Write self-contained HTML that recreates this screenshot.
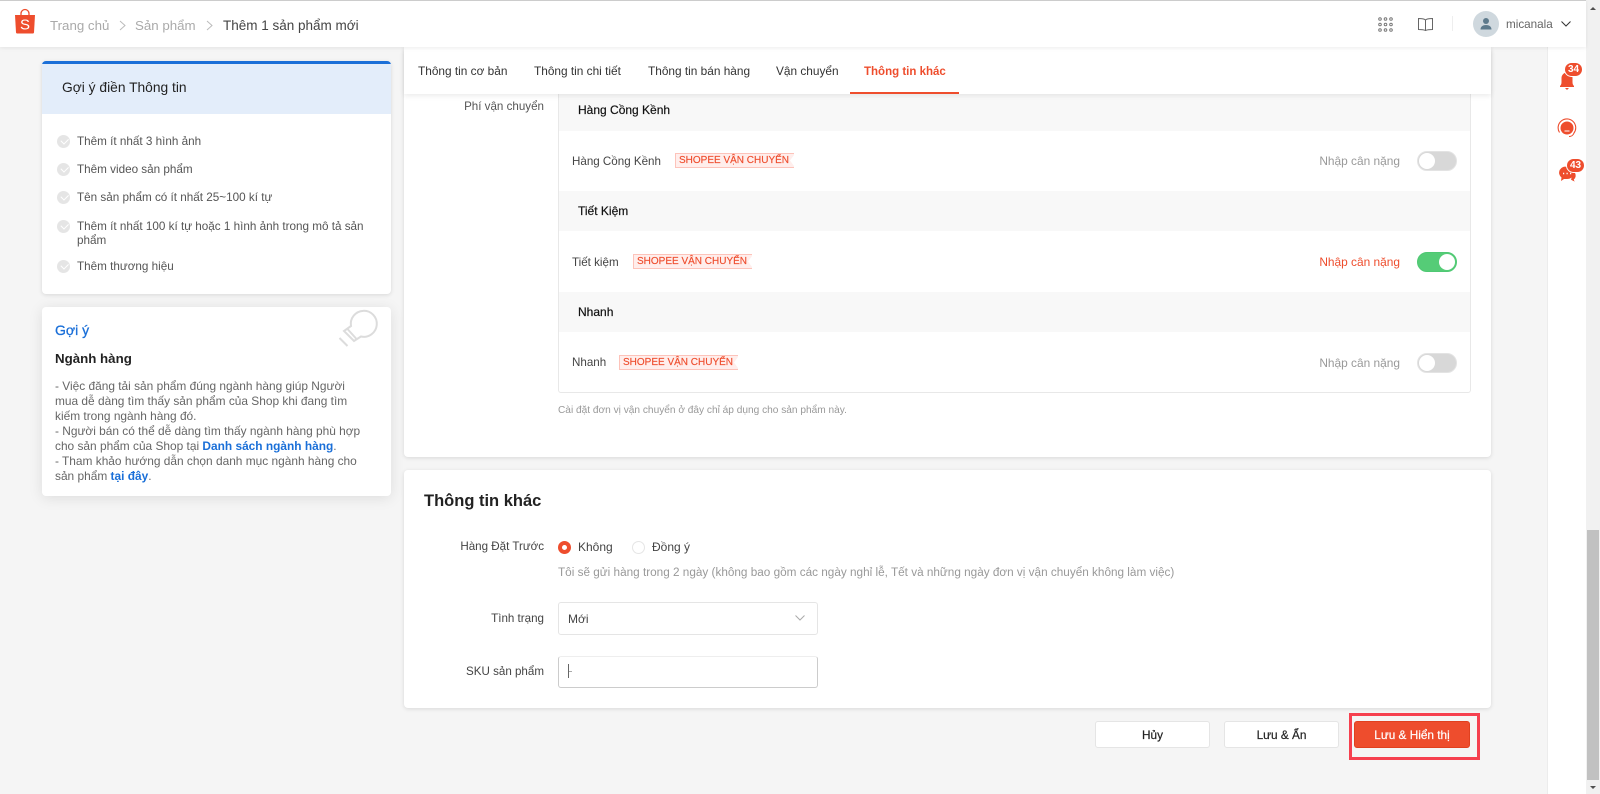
<!DOCTYPE html>
<html lang="vi"><head><meta charset="utf-8"><title>Thêm 1 sản phẩm mới</title>
<style>
*{box-sizing:border-box}
html,body{margin:0;width:1600px;height:794px;overflow:hidden}
body{background:#f5f5f5;font-family:"Liberation Sans",sans-serif;font-size:12px;color:#333;position:relative}
.a{position:absolute;white-space:nowrap}
.card{position:absolute;background:#fff;border-radius:4px;box-shadow:0 1px 4px rgba(0,0,0,.12)}
.chk{position:absolute;left:57px;width:13px;height:13px;border-radius:50%;background:#e5e5e5}
.chk:after{content:"";position:absolute;left:3.5px;top:3px;width:6px;height:3.5px;border-left:1.2px solid #fff;border-bottom:1.2px solid #fff;transform:rotate(-45deg)}
.li{position:absolute;left:77px;color:#555;line-height:14px;width:300px;font-size:11.7px;margin-top:1px}
.tab{position:absolute;top:64px;font-size:11.85px;line-height:14px;color:#333;white-space:nowrap}
.hd{position:absolute;left:559px;width:911px;background:#f8f8f8;height:40px}
.hdt{position:absolute;left:578px;font-size:12px;color:#111;line-height:14px;white-space:nowrap;-webkit-text-stroke:.2px #111}
.rt{position:absolute;left:572px;font-size:11.6px;color:#444;line-height:14px;white-space:nowrap;margin-top:1px}
.tag{position:absolute;height:15px;background:#ffeeec;border:1px solid #fdc3ba;border-right:0;color:#ee4d2d;font-size:10px;line-height:13px;padding-left:3px;white-space:nowrap;-webkit-text-stroke:.15px #ee4d2d}
.tag:after{content:"";position:absolute;right:0;top:1px;width:4px;height:11px;background:#fff;clip-path:polygon(100% 0,100% 100%,0 50%)}
.lbl{position:absolute;right:200px;font-size:11.9px;color:#999;line-height:14px;white-space:nowrap}
.tg{position:absolute;left:1417px;width:40px;height:20px;border-radius:10px;background:#d8d8d8;border:1px solid #e3e3e3}
.tg:after{content:"";position:absolute;left:1px;top:1px;width:16px;height:16px;border-radius:50%;background:#fff}
.tg.on{background:#55cc77;border-color:#4fc873}
.tg.on:after{left:21px}
.fl{position:absolute;right:1056px;font-size:11.6px;color:#444;line-height:14px;white-space:nowrap}
.btn{position:absolute;top:721px;height:27px;border-radius:3px;background:#fff;border:1px solid #e5e5e5;text-align:center;line-height:26px;font-size:11.800px;color:#222;-webkit-text-stroke:.2px}
.badge{position:absolute;background:#ee4d2d;color:#fff;border-radius:8px;border:1px solid #fff;font-size:10px;font-weight:bold;line-height:13px;height:15px;width:19px;text-align:center}
</style></head><body>

<!-- right sidebar -->
<div class="a" style="left:1547px;top:47px;width:39px;height:747px;background:#fff;border-left:1px solid #ececec"></div>
<!-- scrollbar -->
<div class="a" style="left:1586px;top:0;width:14px;height:794px;background:#f1f1f1"></div>
<div class="a" style="left:1587px;top:530px;width:12px;height:250px;background:#c1c1c1"></div>
<svg class="a" style="left:1586px;top:0" width="14" height="14"><path d="M4 10l3-3 3 3z" fill="#505050"/></svg>
<svg class="a" style="left:1586px;top:780px" width="14" height="14"><path d="M4 6l3 3 3-3z" fill="#505050"/></svg>

<!-- left cards -->
<div class="card" style="left:42px;top:61px;width:349px;height:233px;overflow:hidden">
  <div style="height:53px;background:#e3edfa;border-top:3px solid #1a6fd8"></div>
</div>
<div class="a" style="left:62px;top:80px;font-size:13.8px;line-height:16px;color:#222">Gợi ý điền Thông tin</div>
<div class="chk" style="top:135px"></div><div class="li" style="top:134px">Thêm ít nhất 3 hình ảnh</div>
<div class="chk" style="top:163px"></div><div class="li" style="top:162px">Thêm video sản phẩm</div>
<div class="chk" style="top:191px"></div><div class="li" style="top:190px">Tên sản phẩm có ít nhất 25~100 kí tự</div>
<div class="chk" style="top:220px"></div><div class="li" style="top:219px">Thêm ít nhất 100 kí tự hoặc 1 hình ảnh trong mô tả sản phẩm</div>
<div class="chk" style="top:260px"></div><div class="li" style="top:259px">Thêm thương hiệu</div>

<div class="card" style="left:42px;top:307px;width:349px;height:189px;box-shadow:0 2px 14px rgba(0,0,0,.1)"></div>
<svg class="a" style="left:335px;top:308px" width="45" height="42" viewBox="335 308 45 42" fill="none" stroke="#dcdcdc" stroke-width="2"><path d="M351 326L344 331L354 341L361 336.500A13 13 0 1 0 351 326Z"/><path d="M347.500 329L356.500 339M339.500 338L347.500 346"/></svg>
<div class="a" style="left:55px;top:322px;font-size:14px;line-height:16px;color:#1a6fd8;-webkit-text-stroke:.3px #1a6fd8">Gợi ý</div>
<div class="a" style="left:55px;top:351px;font-size:13.3px;line-height:16px;font-weight:bold;color:#222">Ngành hàng</div>
<div class="a" style="left:55px;top:379px;width:320px;font-size:11.9px;line-height:15px;color:#666;white-space:normal">- Việc đăng tải sản phẩm đúng ngành hàng giúp Người<br>mua dễ dàng tìm thấy sản phẩm của Shop khi đang tìm<br>kiếm trong ngành hàng đó.<br>- Người bán có thể dễ dàng tìm thấy ngành hàng phù hợp<br>cho sản phẩm của Shop tại <b style="color:#1a6fd8">Danh sách ngành hàng</b>.<br>- Tham khảo hướng dẫn chọn danh mục ngành hàng cho<br>sản phẩm <b style="color:#1a6fd8">tại đây</b>.</div>

<!-- main panel -->
<div class="card" style="left:404px;top:47px;width:1087px;height:410px"></div>
<div class="a" style="left:558px;top:94px;width:913px;height:299px;border:1px solid #e8e8e8;border-top:0;border-radius:0 0 3px 3px"></div>
<div class="a" style="right:1056px;top:100px;font-size:11.6px;line-height:14px;color:#555">Phí vận chuyển</div>

<div class="hd" style="top:94px;height:37px"></div>
<div class="hdt" style="top:103px">Hàng Cồng Kềnh</div>
<div class="rt" style="top:154px">Hàng Cồng Kềnh</div>
<div class="tag" style="left:675px;top:153px;width:119px">SHOPEE VẬN CHUYỂN</div>
<div class="lbl" style="top:154px">Nhập cân nặng</div>
<div class="tg" style="top:151px"></div>

<div class="hd" style="top:191px;height:40px"></div>
<div class="hdt" style="top:204px">Tiết Kiệm</div>
<div class="rt" style="top:255px">Tiết kiệm</div>
<div class="tag" style="left:633px;top:254px;width:119px">SHOPEE VẬN CHUYỂN</div>
<div class="lbl" style="top:255px;color:#ee4d2d">Nhập cân nặng</div>
<div class="tg on" style="top:252px"></div>

<div class="hd" style="top:292px;height:40px"></div>
<div class="hdt" style="top:305px">Nhanh</div>
<div class="rt" style="top:355px">Nhanh</div>
<div class="tag" style="left:619px;top:355px;width:119px">SHOPEE VẬN CHUYỂN</div>
<div class="lbl" style="top:356px">Nhập cân nặng</div>
<div class="tg" style="top:353px"></div>

<div class="a" style="left:558px;top:403.500px;font-size:10.15px;line-height:13px;color:#999">Cài đặt đơn vị vận chuyển ở đây chỉ áp dụng cho sản phẩm này.</div>

<!-- tabs -->
<div class="a" style="left:404px;top:47px;width:1087px;height:47px;background:#fff;box-shadow:0 2px 5px rgba(0,0,0,.08)"></div>
<div class="tab" style="left:418px">Thông tin cơ bản</div>
<div class="tab" style="left:534px">Thông tin chi tiết</div>
<div class="tab" style="left:648px">Thông tin bán hàng</div>
<div class="tab" style="left:776px">Vận chuyển</div>
<div class="tab" style="left:864px;top:65px;color:#ee4d2d;font-weight:bold;font-size:11.500px">Thông tin khác</div>
<div class="a" style="left:850px;top:92px;width:109px;height:2px;background:#ee4d2d"></div>

<!-- panel 2 -->
<div class="card" style="left:404px;top:470px;width:1087px;height:238px"></div>
<div class="a" style="left:424px;top:492px;font-size:16.5px;line-height:19px;font-weight:bold;color:#222">Thông tin khác</div>
<div class="fl" style="top:540px">Hàng Đặt Trước</div>
<div class="a" style="left:558px;top:541px;width:13px;height:13px;border-radius:50%;border:4px solid #ee4d2d;background:#fff"></div>
<div class="a" style="left:578px;top:540px;line-height:14px;color:#444">Không</div>
<div class="a" style="left:632px;top:541px;width:13px;height:13px;border-radius:50%;border:1px solid #e5e5e5;background:#fff"></div>
<div class="a" style="left:652px;top:540px;line-height:14px;color:#444">Đồng ý</div>
<div class="a" style="left:558px;top:565.500px;line-height:14px;font-size:11.75px;color:#999">Tôi sẽ gửi hàng trong 2 ngày (không bao gồm các ngày nghỉ lễ, Tết và những ngày đơn vị vận chuyển không làm việc)</div>
<div class="fl" style="top:612px">Tình trạng</div>
<div class="a" style="left:558px;top:602px;width:260px;height:33px;border:1px solid #e5e5e5;border-radius:3px;background:#fff"></div>
<div class="a" style="left:568px;top:612px;line-height:14px;color:#444">Mới</div>
<svg class="a" style="left:795px;top:614px" width="10" height="8" fill="none" stroke="#aaa"><path d="M.5 1.500l4.500 4.500 4.500-4.500"/></svg>
<div class="fl" style="top:665px">SKU sản phẩm</div>
<div class="a" style="left:558px;top:656px;width:260px;height:32px;border:1px solid #ccc;border-top-color:#eee;border-radius:3px;background:#fff"></div>
<div class="a" style="left:568px;top:664px;width:1px;height:14px;background:#666"></div>
<div class="a" style="left:569px;top:671px;width:3px;height:1px;background:#aaa"></div>

<!-- buttons -->
<div class="btn" style="left:1095px;width:115px">Hủy</div>
<div class="btn" style="left:1224px;width:115px">Lưu &amp; Ẩn</div>
<div class="btn" style="left:1354px;width:116px;background:#ee4d2d;border-color:#e0401f;color:#fff">Lưu &amp; Hiển thị</div>
<div class="a" style="left:1349px;top:713px;width:131px;height:47px;border:3px solid #f6404f"></div>

<!-- sidebar icons -->
<svg class="a" style="left:1557px;top:70px" width="20" height="22"><path d="M3 16c1-1 1.500-2 1.500-4V8a5.500 5.500 0 0 1 11 0v4c0 2 .5 3 1.500 4v1H3z" fill="#ee4d2d"/><path d="M8 18h4l-2 2z" fill="#ee4d2d"/></svg>
<div class="badge" style="left:1564px;top:62px">34</div>
<svg class="a" style="left:1556px;top:117px" width="22" height="22" fill="none"><circle cx="11" cy="11" r="6.500" fill="#ee4d2d"/><path d="M3.500 15.500A8.800 8.800 0 1 1 18 16a5 5 0 0 1-5 3.500" stroke="#ee4d2d" stroke-width="1.100"/><path d="M8.500 14h5" stroke="#fff"/></svg>
<svg class="a" style="left:1558px;top:165px" width="20" height="18"><path d="M9 2a7 6 0 0 1 0 12H6l-3 2 .5-3.500A6 6 0 0 1 9 2z" fill="#ee4d2d"/><path d="M15 6a5 5 0 0 1 1 8.500l1 2.500-4-2" fill="#ee4d2d" stroke="#fff" stroke-width=".5"/><path d="M5 8.500h1.200M8.500 8.500h1.200M12 8.500h1.200" stroke="#fff" stroke-width="1.400"/></svg>
<div class="badge" style="left:1566px;top:158px">43</div>

<!-- header -->
<div class="a" style="left:0;top:0;width:1586px;height:47px;background:#fff;border-top:1px solid #ccc;box-shadow:0 1px 4px rgba(0,0,0,.08)"></div>
<svg class="a" style="left:14px;top:8px" width="22" height="26"><path d="M1 7h20l-1 17.500q-.1 1-1.200 1H3.200q-1.100 0-1.200-1z" fill="#ee4d2d"/><path d="M7 7V5.500a4 4 0 0 1 8 0V7" fill="none" stroke="#ee4d2d" stroke-width="1.300"/><text x="11" y="21.500" font-family="Liberation Sans" font-size="15" fill="#fff" text-anchor="middle">S</text></svg>
<div class="a" style="left:50px;top:17px;font-size:13.3px;line-height:17px;color:#aaa">Trang chủ</div>
<svg class="a" style="left:119px;top:20px" width="8" height="11" fill="none" stroke="#bbb"><path d="M1 1l5 4.500-5 4.500"/></svg>
<div class="a" style="left:135px;top:17px;font-size:13.3px;line-height:17px;color:#aaa">Sản phẩm</div>
<svg class="a" style="left:206px;top:20px" width="8" height="11" fill="none" stroke="#bbb"><path d="M1 1l5 4.500-5 4.500"/></svg>
<div class="a" style="left:223px;top:17px;font-size:13.5px;line-height:17px;color:#444">Thêm 1 sản phẩm mới</div>

<svg class="a" style="left:1378px;top:17px" width="15" height="15" fill="none" stroke="#777"><g><circle cx="2" cy="2" r="1.300"/><circle cx="7.500" cy="2" r="1.300"/><circle cx="13" cy="2" r="1.300"/><circle cx="2" cy="7.500" r="1.300"/><circle cx="7.500" cy="7.500" r="1.300"/><circle cx="13" cy="7.500" r="1.300"/><circle cx="2" cy="13" r="1.300"/><circle cx="7.500" cy="13" r="1.300"/><circle cx="13" cy="13" r="1.300"/></g></svg>
<svg class="a" style="left:1418px;top:17px" width="15" height="15" fill="none" stroke="#666"><path d="M7.500 3C6 1.500 3 1.500.5 1.500v11c2.500 0 5 0 7 1 2-1 4.500-1 7-1v-11c-2.500 0-5.500 0-7 1.500zM7.500 3v10.500"/></svg>
<div class="a" style="left:1452px;top:16px;width:1px;height:15px;background:#eee"></div>
<div class="a" style="left:1473px;top:11px;width:26px;height:26px;border-radius:50%;background:#cfd8de"></div>
<svg class="a" style="left:1479px;top:17px" width="14" height="14" fill="#5d7a8c"><circle cx="7" cy="4" r="3"/><path d="M1.500 12.500c0-3 2.500-4.500 5.500-4.500s5.500 1.500 5.500 4.500z"/></svg>
<div class="a" style="left:1506px;top:18px;font-size:11.7px;line-height:14px;color:#666">micanala</div>
<svg class="a" style="left:1561px;top:20px" width="10" height="8" fill="none" stroke="#333"><path d="M.5 1.500l4.500 4.500 4.500-4.500"/></svg>
</body></html>
